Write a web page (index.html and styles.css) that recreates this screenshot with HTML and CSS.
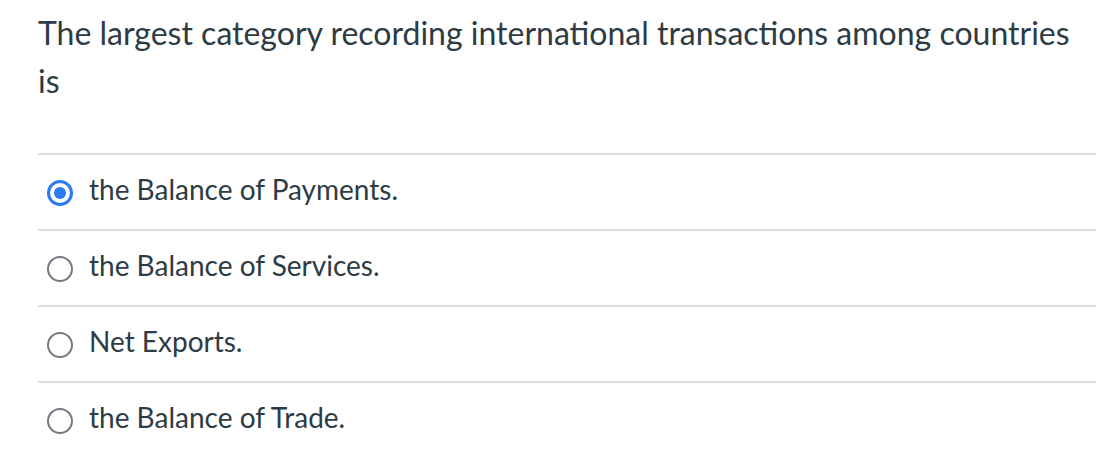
FILE: index.html
```html
<!DOCTYPE html>
<html>
<head>
<meta charset="utf-8">
<link rel="stylesheet" href="styles.css">
</head>
<body>
<div class="question">
  <div class="question-text">The largest category recording international transactions among countries is</div>
  <div class="answers">
    <label class="answer">
      <span class="radio checked"><span class="dot"></span></span>
      <span class="answer-text">the Balance of Payments.</span>
    </label>
    <label class="answer">
      <span class="radio"></span>
      <span class="answer-text">the Balance of Services.</span>
    </label>
    <label class="answer">
      <span class="radio"></span>
      <span class="answer-text">Net Exports.</span>
    </label>
    <label class="answer">
      <span class="radio"></span>
      <span class="answer-text">the Balance of Trade.</span>
    </label>
  </div>
</div>
</body>
</html>
```
FILE: styles.css
```css
html, body {
  margin: 0;
  padding: 0;
  background: #ffffff;
}
body {
  font-family: Lato, "Liberation Sans", sans-serif;
  color: #2d3b45;
}
.question {
  padding: 9px 8px 0 38px;
}
.question-text {
  font-size: 32px;
  line-height: 48px;
  padding-right: 20px;
}
.answers {
  margin-top: 48px;
}
.answer {
  display: flex;
  align-items: center;
  height: 74px;
  border-top: 2px solid #dcdcdc;
}
.radio {
  box-sizing: border-box;
  flex: none;
  width: 26px;
  height: 26px;
  margin: 2px 16px 0 9px;
  border: 2px solid #737b82;
  border-radius: 50%;
  display: flex;
  align-items: center;
  justify-content: center;
}
.radio.checked {
  border: 3px solid #2b7af0;
}
.dot {
  width: 12px;
  height: 12px;
  border-radius: 50%;
  background: #2b7af0;
}
.answer-text {
  font-size: 28px;
  margin-bottom: 6px;
}
```
